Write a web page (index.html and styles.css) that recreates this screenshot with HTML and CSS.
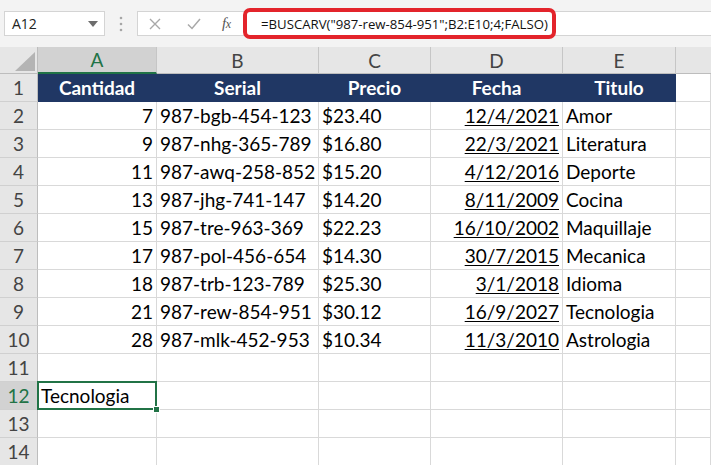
FILE: index.html
```html
<!DOCTYPE html>
<html>
<head>
<meta charset="utf-8">
<link rel="stylesheet" href="styles.css">
</head>
<body>
<div class="toolbar">
  <div class="namebox">
    <span class="nb-text">A12</span>
    <svg class="nb-caret" width="10" height="6" viewBox="0 0 10 6"><path d="M0 0 H10 L5 6 Z" fill="#6d6d6d"/></svg>
  </div>
  <div class="grip">
    <svg width="4" height="16" viewBox="0 0 4 16"><circle cx="2" cy="2" r="1.3" fill="#a6a6a6"/><circle cx="2" cy="8" r="1.3" fill="#a6a6a6"/><circle cx="2" cy="14" r="1.3" fill="#a6a6a6"/></svg>
  </div>
  <div class="fbar">
    <div class="ficons">
      <svg class="fi-x" width="12" height="12" viewBox="0 0 12 12"><path d="M1 1 L11 11 M11 1 L1 11" stroke="#a8a8a8" stroke-width="1.4" fill="none"/></svg>
      <svg class="fi-ok" width="14" height="12" viewBox="0 0 14 12"><path d="M1 6.5 L5 10.5 L13 1" stroke="#a8a8a8" stroke-width="1.5" fill="none"/></svg>
      <span class="fi-fx">f<span class="fx-x">x</span></span>
    </div>
    <div class="formula">=BUSCARV("987-rew-854-951";B2:E10;4;FALSO)</div>
  </div>
</div>

<div class="sheet">
  <div class="corner"><svg width="20" height="19" viewBox="0 0 20 19"><path d="M20 0 V19 H0 Z" fill="#b4b4b4"/></svg></div>
  <div class="ch sel">A</div><div class="ch">B</div><div class="ch">C</div><div class="ch">D</div><div class="ch">E</div><div class="ch last"></div>

  <div class="rh">1</div>
  <div class="c hd">Cantidad</div><div class="c hd">Serial</div><div class="c hd">Precio</div><div class="c hd">Fecha</div><div class="c hd">Titulo</div><div class="c"></div>

  <div class="rh">2</div>
  <div class="c r">7</div><div class="c">987-bgb-454-123</div><div class="c">$23.40</div><div class="c r u">12/4/2021</div><div class="c">Amor</div><div class="c"></div>

  <div class="rh">3</div>
  <div class="c r">9</div><div class="c">987-nhg-365-789</div><div class="c">$16.80</div><div class="c r u">22/3/2021</div><div class="c">Literatura</div><div class="c"></div>

  <div class="rh">4</div>
  <div class="c r">11</div><div class="c">987-awq-258-852</div><div class="c">$15.20</div><div class="c r u">4/12/2016</div><div class="c">Deporte</div><div class="c"></div>

  <div class="rh">5</div>
  <div class="c r">13</div><div class="c">987-jhg-741-147</div><div class="c">$14.20</div><div class="c r u">8/11/2009</div><div class="c">Cocina</div><div class="c"></div>

  <div class="rh">6</div>
  <div class="c r">15</div><div class="c">987-tre-963-369</div><div class="c">$22.23</div><div class="c r u">16/10/2002</div><div class="c">Maquillaje</div><div class="c"></div>

  <div class="rh">7</div>
  <div class="c r">17</div><div class="c">987-pol-456-654</div><div class="c">$14.30</div><div class="c r u">30/7/2015</div><div class="c">Mecanica</div><div class="c"></div>

  <div class="rh">8</div>
  <div class="c r">18</div><div class="c">987-trb-123-789</div><div class="c">$25.30</div><div class="c r u">3/1/2018</div><div class="c">Idioma</div><div class="c"></div>

  <div class="rh">9</div>
  <div class="c r">21</div><div class="c">987-rew-854-951</div><div class="c">$30.12</div><div class="c r u">16/9/2027</div><div class="c">Tecnologia</div><div class="c"></div>

  <div class="rh">10</div>
  <div class="c r">28</div><div class="c">987-mlk-452-953</div><div class="c">$10.34</div><div class="c r u">11/3/2010</div><div class="c">Astrologia</div><div class="c"></div>

  <div class="rh">11</div>
  <div class="c"></div><div class="c"></div><div class="c"></div><div class="c"></div><div class="c"></div><div class="c"></div>

  <div class="rh sel">12</div>
  <div class="c active">Tecnologia<span class="handle"></span></div><div class="c"></div><div class="c"></div><div class="c"></div><div class="c"></div><div class="c"></div>

  <div class="rh">13</div>
  <div class="c"></div><div class="c"></div><div class="c"></div><div class="c"></div><div class="c"></div><div class="c"></div>

  <div class="rh">14</div>
  <div class="c"></div><div class="c"></div><div class="c"></div><div class="c"></div><div class="c"></div><div class="c"></div>
</div>
</body>
</html>
```

FILE: styles.css
```css
* { box-sizing: border-box; }
html, body { margin: 0; padding: 0; }
body {
  width: 711px;
  height: 465px;
  overflow: hidden;
  background: #ffffff;
  font-family: "Lato", "Liberation Sans", sans-serif;
}

.toolbar {
  height: 47px;
  background: #f3f3f3;
  display: flex;
  align-items: center;
  padding-left: 4px;
}

.namebox {
  width: 101px;
  height: 25px;
  background: #fff;
  border: 1px solid #d4d4d4;
  display: flex;
  align-items: center;
  justify-content: space-between;
  padding: 0 6px 0 7px;
  font-family: "Open Sans", "Liberation Sans", sans-serif;
  font-size: 14px;
  color: #222;
}

.grip {
  width: 32px;
  display: flex;
  justify-content: center;
  align-items: center;
}

.fbar {
  flex: 1;
  height: 25px;
  background: #fff;
  border: 1px solid #d4d4d4;
  border-right: none;
  display: flex;
  align-items: center;
}

.ficons {
  width: 105px;
  display: flex;
  align-items: center;
  padding-left: 11px;
}
.fi-x { margin-right: 26px; }
.fi-ok { margin-right: 21px; }
.fi-fx {
  font-family: "Liberation Serif", serif;
  font-style: italic;
  font-size: 15px;
  color: #555;
  letter-spacing: -0.5px;
}
.fx-x { font-size: 12px; }

.formula {
  height: 31px;
  width: 313px;
  border: 4px solid #e3242b;
  border-radius: 7px;
  display: flex;
  align-items: center;
  padding-left: 14px;
  font-family: "Open Sans", "Liberation Sans", sans-serif;
  font-size: 13.2px;
  color: #111;
  white-space: nowrap;
}

.sheet {
  display: grid;
  grid-template-columns: 38px 119px 162px 112px 132px 113px 1fr;
  grid-template-rows: 27px repeat(14, 28px);
}

.corner {
  background: #e6e6e6;
  border-right: 1px solid #bdbdbd;
  border-bottom: 1px solid #bdbdbd;
  display: flex;
  align-items: flex-end;
  justify-content: flex-end;
  padding: 0 2px 2px 0;
}

.ch {
  background: #e6e6e6;
  border-right: 1px solid #c6c6c6;
  border-bottom: 1px solid #bdbdbd;
  display: flex;
  align-items: center;
  justify-content: center;
  font-size: 19px;
  color: #444;
}
.ch.sel {
  background: #d2d2d2;
  color: #217346;
  border-bottom: 2px solid #217346;
}
.ch.last { border-right: none; }

.rh {
  background: #e6e6e6;
  border-right: 1px solid #bdbdbd;
  border-bottom: 1px solid #d0d0d0;
  display: flex;
  align-items: center;
  justify-content: center;
  font-size: 19px;
  color: #444;
}
.rh.sel {
  background: #d2d2d2;
  color: #217346;
}

.c {
  border-right: 1px solid #d9d9d9;
  border-bottom: 1px solid #d9d9d9;
  display: flex;
  align-items: center;
  padding: 0 3px;
  font-size: 19px;
  color: #000;
  white-space: nowrap;
}
.c.r { justify-content: flex-end; }
.c.u { text-decoration: underline; text-decoration-thickness: 1px; text-underline-offset: 2px; }

.c.hd {
  background: #203764;
  border-right-color: #203764;
  border-bottom-color: #203764;
  color: #fff;
  font-weight: bold;
  justify-content: center;
}

.c.active { position: relative; }
.c.active::after {
  content: "";
  position: absolute;
  top: -1px;
  left: -1px;
  right: -1px;
  bottom: -1px;
  border: 2px solid #217346;
}
.handle {
  position: absolute;
  right: -4px;
  bottom: -4px;
  width: 7px;
  height: 7px;
  background: #217346;
  border: 1px solid #fff;
  z-index: 2;
}
```
